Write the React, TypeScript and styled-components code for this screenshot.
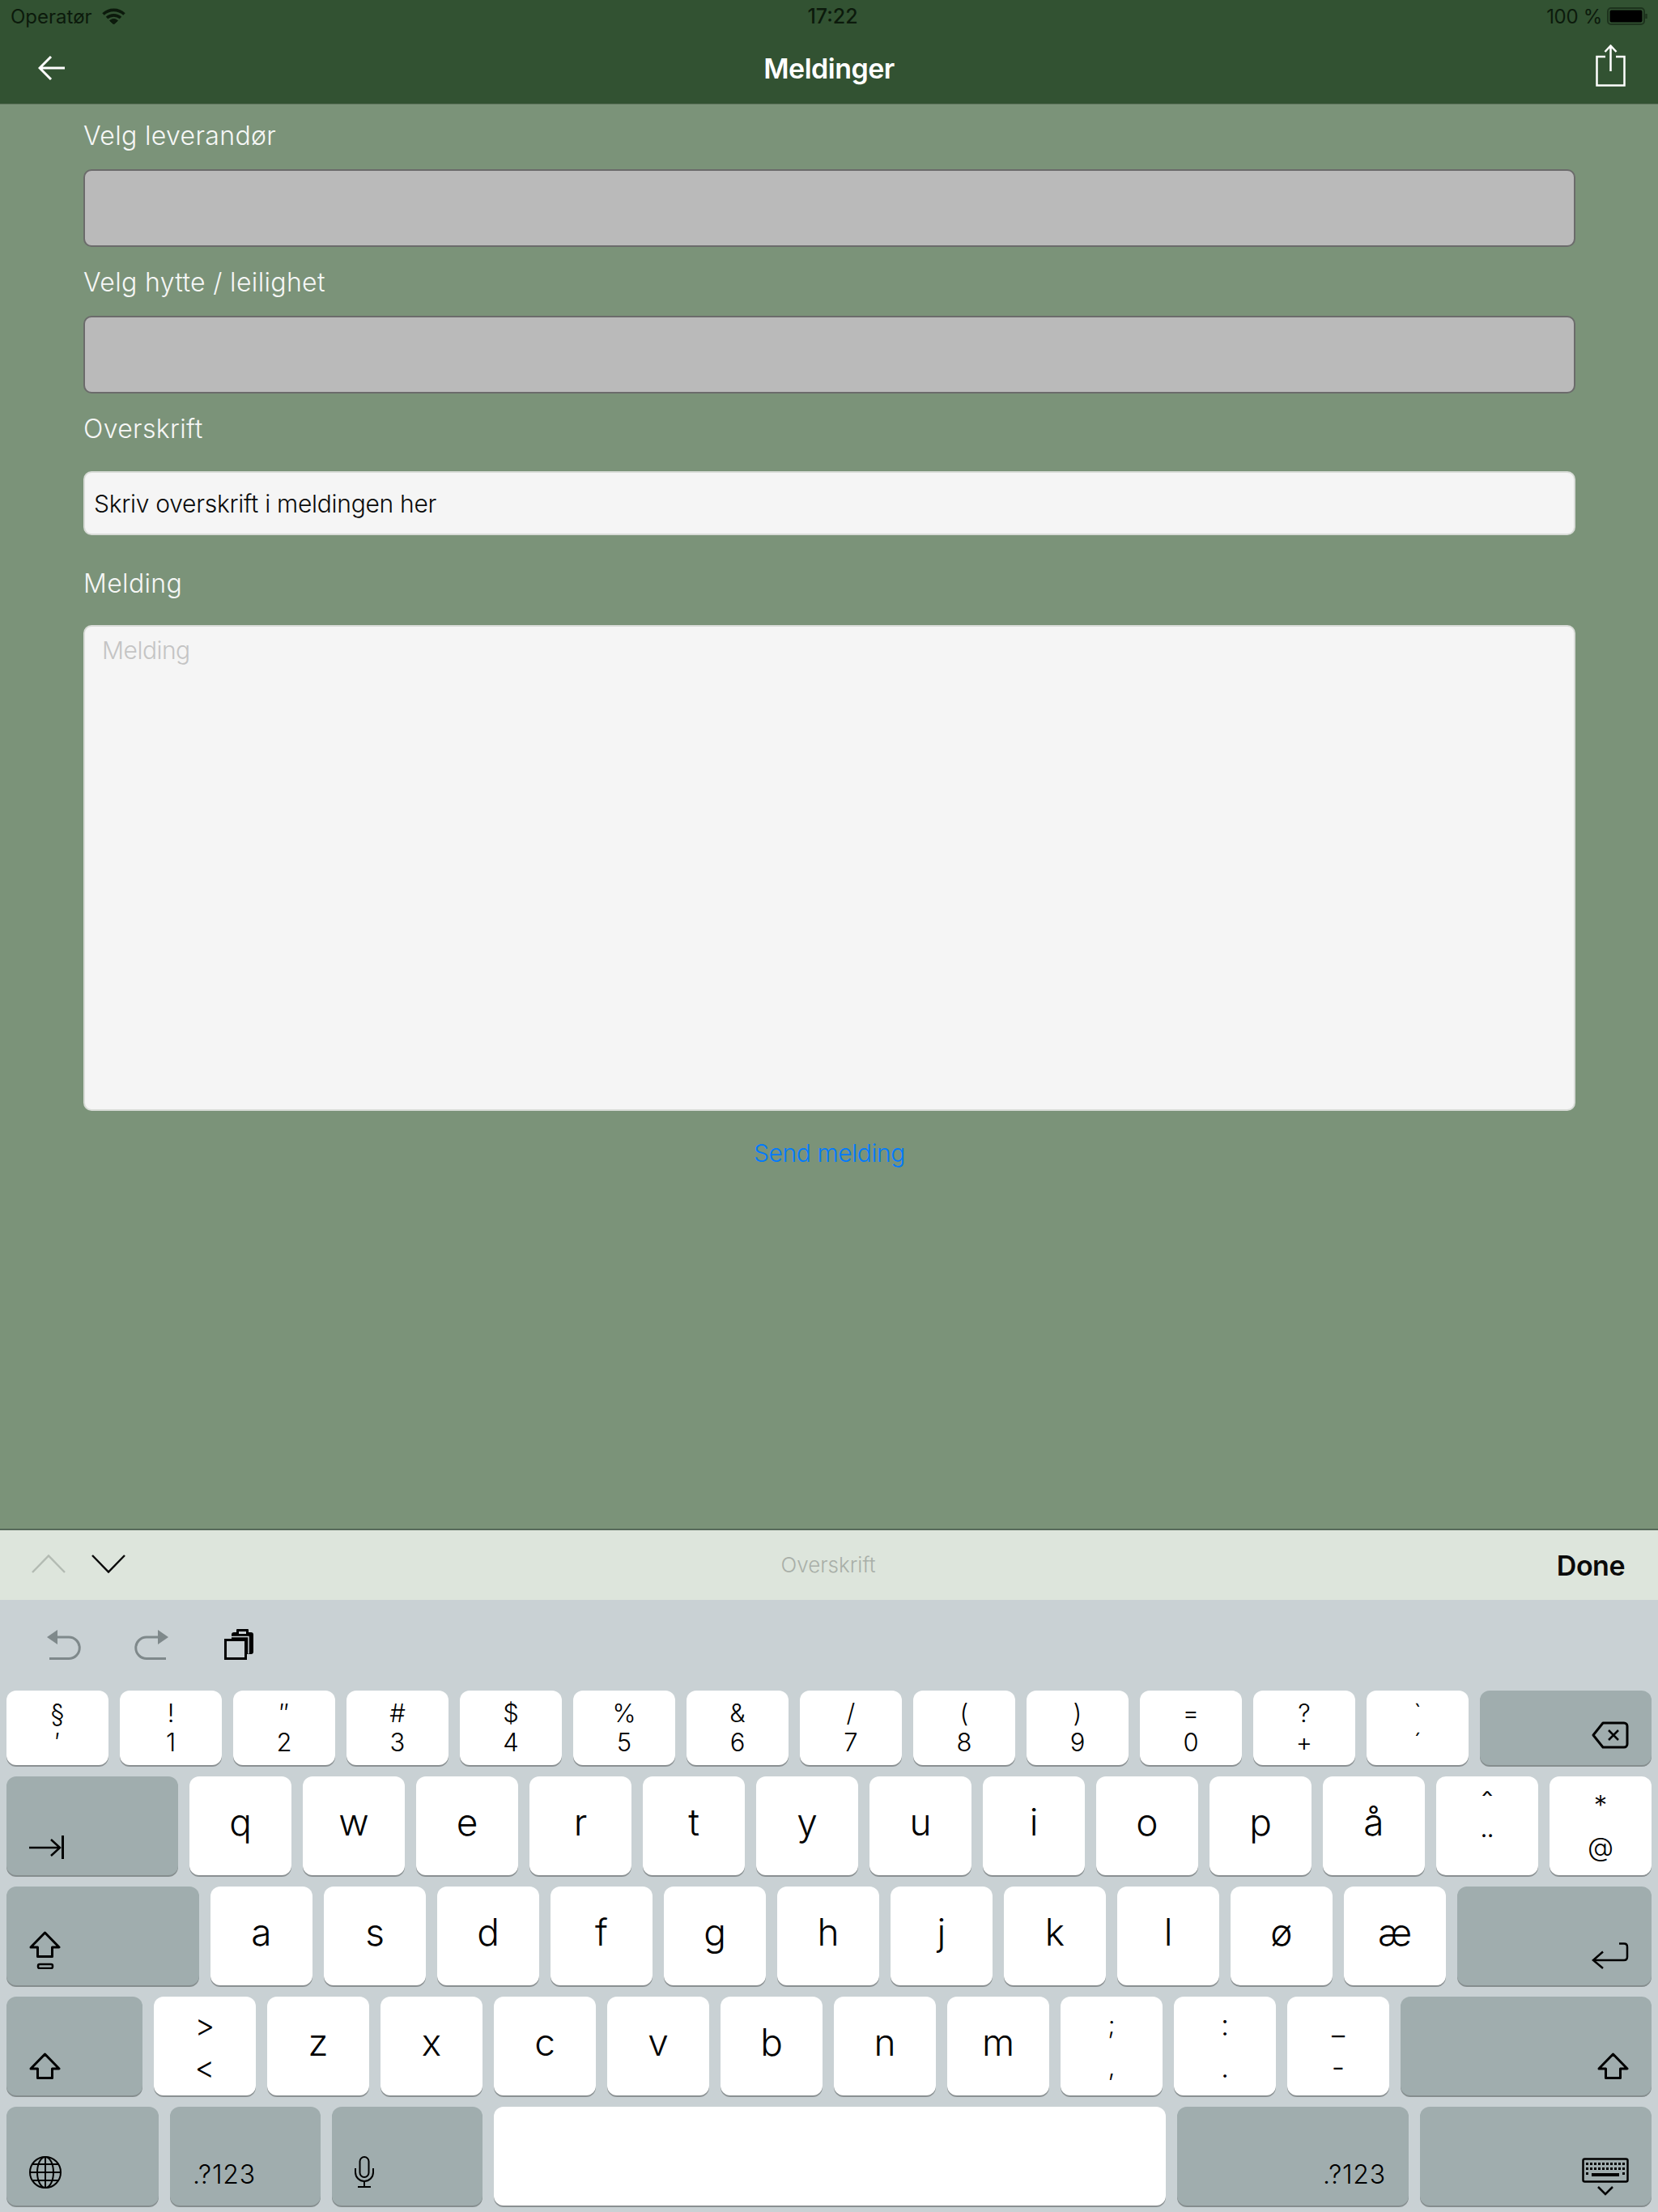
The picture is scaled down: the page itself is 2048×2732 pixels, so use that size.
import React from "react";
import styled, { createGlobalStyle } from "styled-components";

const GlobalStyle = createGlobalStyle`
  html, body {
    margin: 0;
    padding: 0;
    background: #7b9379;
  }
  * {
    box-sizing: border-box;
  }
`;

const Page = styled.div`
  width: 2048px;
  height: 2732px;
  display: flex;
  flex-direction: column;
  overflow: hidden;
  font-family: Inter, "Liberation Sans", sans-serif;
  background: #7b9379;
`;

const Header = styled.header`
  height: 129px;
  flex: none;
  background: #325232;
  border-bottom: 1px solid #5f735d;
`;

const StatusBar = styled.div`
  height: 40px;
  padding: 0 12px 0 13px;
  display: grid;
  grid-template-columns: 1fr auto 1fr;
  align-items: center;
  font-size: 24px;
  color: #0c1a0c;
`;

const StatusLeft = styled.div`
  display: flex;
  align-items: center;
  gap: 12px;
`;

const StatusTime = styled.div`
  padding-left: 8px;
  font-size: 25px;
  font-weight: 500;
`;

const StatusRight = styled.div`
  display: flex;
  align-items: center;
  justify-content: flex-end;
  gap: 6px;
  letter-spacing: -0.3px;
`;

const NavBar = styled.div`
  height: 88px;
  padding: 0 40px;
  display: grid;
  grid-template-columns: 1fr auto 1fr;
  align-items: center;
`;

const NavStart = styled.div`
  padding-left: 7px;
`;

const NavTitle = styled.h1`
  margin: 0;
  font-size: 34px;
  font-weight: 600;
  letter-spacing: -0.5px;
  color: #fff;
`;

const NavEnd = styled.div`
  display: flex;
  justify-content: flex-end;
  padding-bottom: 7px;
`;

const Form = styled.main`
  flex: 1;
  display: flex;
  flex-direction: column;
  padding: 0 102px 0 103px;
`;

const Label = styled.label<{ $h: number; $pb: number }>`
  height: ${(p) => p.$h}px;
  padding-bottom: ${(p) => p.$pb}px;
  display: flex;
  align-items: flex-end;
  font-size: 32px;
  font-weight: 350;
  line-height: 40px;
  letter-spacing: 0.35px;
  color: #f6f7f6;
`;

const Picker = styled.div`
  height: 96px;
  background: #bababa;
  border: 2px solid #6b6b6b;
  border-radius: 10px;
`;

const TextField = styled.div`
  height: 79px;
  padding: 0 11px;
  display: flex;
  align-items: center;
  background: #f5f5f5;
  border: 2px solid #d9dcd8;
  border-radius: 10px;
  font-size: 30px;
  font-weight: 350;
  letter-spacing: -0.28px;
  color: #0a0a0a;
`;

const TextArea = styled.div`
  height: 600px;
  padding: 10px 21px;
  background: #f5f5f5;
  border: 2px solid #d9dcd8;
  border-radius: 10px;
  font-size: 30px;
  font-weight: 350;
  line-height: 38px;
  letter-spacing: -0.5px;
  color: #c4c4c4;
`;

const SendRow = styled.div`
  height: 90px;
  display: flex;
  justify-content: center;
  padding-top: 14px;
`;

const SendButton = styled.button`
  padding: 0;
  border: 0;
  background: none;
  font-family: inherit;
  font-size: 30px;
  font-weight: 350;
  line-height: 40px;
  letter-spacing: -0.4px;
  color: #007aff;
`;

const Accessory = styled.div`
  height: 88px;
  flex: none;
  padding: 0 41px 0 39px;
  display: grid;
  grid-template-columns: 1fr auto 1fr;
  align-items: center;
  background: #dde5dc;
  border-top: 2px solid #56695a;
`;

const ArrowGroup = styled.div`
  display: flex;
  gap: 32px;
  padding-bottom: 4px;
`;

const FieldName = styled.div`
  padding-bottom: 2px;
  font-size: 26px;
  font-weight: 350;
  color: #a9afa8;
`;

const DoneButton = styled.button`
  justify-self: end;
  padding: 0;
  border: 0;
  background: none;
  font-family: inherit;
  font-size: 34px;
  font-weight: 600;
  letter-spacing: -0.5px;
  color: #0a0a0a;
`;

const Keyboard = styled.section`
  flex: none;
  height: 756px;
  padding: 0 8px;
  background: #c9d1d4;
`;

const UndoBar = styled.div`
  height: 112px;
  padding: 0 0 38px 50px;
  display: flex;
  align-items: flex-end;
  gap: 66px;
`;

const KeyRows = styled.div`
  display: flex;
  flex-direction: column;
  gap: 14px;
`;

const KeyRow = styled.div`
  display: flex;
  gap: 14px;
`;

const Key = styled.div<{ $w?: number; $h: number }>`
  width: ${(p) => p.$w ?? 126}px;
  height: ${(p) => p.$h}px;
  flex: none;
  display: flex;
  flex-direction: column;
  align-items: center;
  justify-content: center;
  background: #fff;
  border-radius: 12px;
  box-shadow: 0 2px 0 #8a9092;
  color: #000;
`;

const Letter = styled.span`
  font-size: 46px;
  font-weight: 350;
  line-height: 50px;
  margin-top: -10px;
`;

const DualTop = styled.span<{ $gap: number; $size: number }>`
  font-size: ${(p) => p.$size}px;
  font-weight: 350;
  line-height: 32px;
  margin-bottom: ${(p) => p.$gap}px;
`;

const DualBottom = styled.span<{ $size: number }>`
  font-size: ${(p) => p.$size}px;
  font-weight: 350;
  line-height: 32px;
`;

const FuncKey = styled.div<{ $w: number; $h: number; $end?: boolean; $pb?: number }>`
  width: ${(p) => p.$w}px;
  height: ${(p) => p.$h}px;
  flex: none;
  padding: 0 28px ${(p) => p.$pb ?? 20}px;
  display: flex;
  align-items: flex-end;
  justify-content: ${(p) => (p.$end ? "flex-end" : "flex-start")};
  background: #a0adae;
  border-radius: 12px;
  box-shadow: 0 2px 0 #858d8e;
  font-size: 32px;
  font-weight: 350;
  line-height: 36px;
  letter-spacing: 0.8px;
  color: #000;
`;

const Icon = styled.svg`
  display: block;
  flex: none;
  fill: none;
  stroke: currentColor;
`;

const BackArrow = () => (
  <Icon width="33" height="30" viewBox="0 0 33 30" strokeWidth="3" color="#fff">
    <path d="M33 15H2M16 1 2 15l14 14" />
  </Icon>
);

const ShareIcon = () => (
  <Icon width="37" height="52" viewBox="0 0 37 52" strokeWidth="2.5" color="#fff">
    <path d="M18.5 1.5V33M11.5 9l7-7.5 7 7.5" />
    <path d="M12 15H1.5v35.5h34V15H25" />
  </Icon>
);

const WifiIcon = () => (
  <Icon width="29" height="20" viewBox="0 0 29 20" strokeWidth="3.6" color="#0c1a0c">
    <path d="M1.5 7.5a19 19 0 0 1 26 0" />
    <path d="M6 12a13 13 0 0 1 17 0" />
    <path d="M9.500 15.500l5 4.500 5-4.500a8 8 0 0 0-10 0z" fill="currentColor" strokeWidth="1" />
  </Icon>
);

const BatteryIcon = () => (
  <Icon width="51" height="22" viewBox="0 0 51 22" strokeWidth="2" color="#0c1a0c">
    <rect x="1" y="1" width="45" height="20" rx="4" opacity="0.55" />
    <rect x="3.5" y="3.5" width="40" height="15" rx="2" fill="#000" stroke="none" />
    <path d="M48.5 8v6" opacity="0.55" strokeWidth="2.5" />
  </Icon>
);

const ChevronUp = () => (
  <Icon width="42" height="23" viewBox="0 0 42 23" strokeWidth="2.5" color="#b3bbb3">
    <path d="M1 22 21 1.5 41 22" />
  </Icon>
);

const ChevronDown = () => (
  <Icon width="42" height="23" viewBox="0 0 42 23" strokeWidth="2.5" color="#0a0a0a">
    <path d="M1 1l20 20.5L41 1" />
  </Icon>
);

const UndoIcon = () => (
  <Icon width="42" height="37" viewBox="0 0 42 37" strokeWidth="3" color="#7f898b">
    <path d="M0 9l13-9v18z" fill="currentColor" stroke="none" />
    <path d="M12 9h15a13 13 0 0 1 0 26.5H3" />
  </Icon>
);

const RedoIcon = () => (
  <Icon width="42" height="37" viewBox="0 0 42 37" strokeWidth="3" color="#7f898b">
    <path d="M42 9 29 0v18z" fill="currentColor" stroke="none" />
    <path d="M30 9H15a13 13 0 0 0 0 26.5h24" />
  </Icon>
);

const PasteIcon = () => (
  <Icon width="39" height="38" viewBox="-3 0 39 38" color="#000">
    <rect x="9" y="4" width="27" height="27" rx="3" fill="#000" stroke="none" />
    <rect x="15" y="0" width="15" height="9" rx="1" fill="#000" stroke="none" />
    <rect x="18" y="3" width="9" height="3" fill="#c9d1d4" stroke="none" />
    <path d="M5 9.5h25v21" stroke="#c9d1d4" strokeWidth="1.5" />
    <rect x="1.5" y="13.5" width="25" height="23" fill="#c9d1d4" strokeWidth="3" />
  </Icon>
);

const DeleteIcon = () => (
  <Icon width="46" height="34" viewBox="0 0 46 34" strokeWidth="3">
    <path d="M14 2h26a4 4 0 0 1 4 4v22a4 4 0 0 1-4 4H14L2 17z" strokeLinejoin="round" />
    <path d="M21 11l12 12M33 11 21 23" strokeWidth="2.5" />
  </Icon>
);

const TabIcon = () => (
  <Icon width="43" height="29" viewBox="0 0 43 29" strokeWidth="2.5">
    <path d="M0 15h38M27 5l11 10-11 10" />
    <path d="M41.5 0v29" strokeWidth="3" />
  </Icon>
);

const ShiftIcon = () => (
  <Icon width="39" height="33" viewBox="0 0 39 33" strokeWidth="3" strokeLinejoin="round">
    <path d="M19.5 2 37 20h-8.500v11.500h-18V20H2z" />
  </Icon>
);

const CapsIcon = () => (
  <Icon width="39" height="47" viewBox="0 0 39 47" strokeWidth="3" strokeLinejoin="round">
    <path d="M19.5 2 37 20h-8.500v11.500h-18V20H2z" />
    <rect x="11" y="41" width="18" height="5" rx="2" strokeWidth="2.5" />
  </Icon>
);

const ReturnIcon = () => (
  <Icon width="46" height="33" viewBox="0 0 46 33" strokeWidth="2.5">
    <path d="M34 1.500h6q4 0 4 4V18q0 4-4 4H3" />
    <path d="M14 11.500 2 22l12 10" />
  </Icon>
);

const GlobeIcon = () => (
  <Icon width="40" height="40" viewBox="0 0 40 40" strokeWidth="2">
    <circle cx="20" cy="20" r="19" />
    <ellipse cx="20" cy="20" rx="10" ry="19" />
    <path d="M20 1v38M1 20h38M4 10h32M4 30h32" />
  </Icon>
);

const MicIcon = () => (
  <Icon width="24" height="39" viewBox="0 0 24 39" strokeWidth="2">
    <rect x="6.500" y="1" width="11" height="25" rx="5.500" />
    <path d="M1 15v5a11 11 0 0 0 22 0v-5M12 31v7M4 38h16" />
  </Icon>
);

const keyboardDots = [
  [5, 10, 15, 20, 25, 30, 35, 40, 45, 50],
  [5, 10, 15, 20, 25, 30, 35, 40, 45, 50],
];

const HideKeyboardIcon = () => (
  <Icon width="58" height="47" viewBox="0 0 58 47" strokeWidth="2.5">
    <rect x="1.500" y="1.500" width="55" height="28" rx="2" />
    {keyboardDots.map((row, i) =>
      row.map((x) => (
        <rect key={`${i}-${x}`} x={x} y={6 + i * 6} width="3" height="3" fill="currentColor" stroke="none" />
      ))
    )}
    <rect x="5" y="18" width="3" height="3" fill="currentColor" stroke="none" />
    <rect x="12" y="19" width="34" height="4" fill="currentColor" stroke="none" />
    <rect x="50" y="18" width="3" height="3" fill="currentColor" stroke="none" />
    <path d="M20 36l9 9 9-9" />
  </Icon>
);

type KeyDef = string | [string, string] | [string, string, number];

const numberRow: KeyDef[] = [
  ["§", "′"],
  ["!", "1"],
  ["″", "2"],
  ["#", "3"],
  ["$", "4"],
  ["%", "5"],
  ["&", "6"],
  ["/", "7"],
  ["(", "8"],
  [")", "9"],
  ["=", "0"],
  ["?", "+"],
  ["`", "´"],
];

const topRow: KeyDef[] = ["q", "w", "e", "r", "t", "y", "u", "i", "o", "p", "å", ["ˆ", "¨", 40], ["*", "@", 33]];
const homeRow: KeyDef[] = ["a", "s", "d", "f", "g", "h", "j", "k", "l", "ø", "æ"];
const bottomRow: KeyDef[] = [
  [">", "<", 38],
  "z",
  "x",
  "c",
  "v",
  "b",
  "n",
  "m",
  [";", ","],
  [":", ".", 36],
  ["_", "-", 36],
];

const renderKeys = (keys: KeyDef[], h: number, gap: number) =>
  keys.map((k) =>
    typeof k === "string" ? (
      <Key key={k} $h={h}>
        <Letter>{k}</Letter>
      </Key>
    ) : (
      <Key key={k[1]} $h={h}>
        <DualTop $gap={gap} $size={k[2] ?? 31}>
          {k[0]}
        </DualTop>
        <DualBottom $size={k[2] ?? 31}>{k[1]}</DualBottom>
      </Key>
    )
  );

const App: React.FC = () => {
  return (
    <Page>
      <GlobalStyle />
      <Header>
        <StatusBar>
          <StatusLeft>
            Operatør
            <WifiIcon />
          </StatusLeft>
          <StatusTime>17:22</StatusTime>
          <StatusRight>
            100 %
            <BatteryIcon />
          </StatusRight>
        </StatusBar>
        <NavBar>
          <NavStart>
            <BackArrow />
          </NavStart>
          <NavTitle>Meldinger</NavTitle>
          <NavEnd>
            <ShareIcon />
          </NavEnd>
        </NavBar>
      </Header>

      <Form>
        <Label $h={80} $pb={21}>Velg leverandør</Label>
        <Picker />
        <Label $h={85} $pb={21}>Velg hytte / leilighet</Label>
        <Picker />
        <Label $h={96} $pb={32}>Overskrift</Label>
        <TextField>Skriv overskrift i meldingen her</TextField>
        <Label $h={111} $pb={31}>Melding</Label>
        <TextArea>Melding</TextArea>
        <SendRow>
          <SendButton>Send melding</SendButton>
        </SendRow>
      </Form>

      <Accessory>
        <ArrowGroup>
          <ChevronUp />
          <ChevronDown />
        </ArrowGroup>
        <FieldName>Overskrift</FieldName>
        <DoneButton>Done</DoneButton>
      </Accessory>

      <Keyboard>
        <UndoBar>
          <UndoIcon />
          <RedoIcon />
          <PasteIcon />
        </UndoBar>
        <KeyRows>
          <KeyRow>
            {renderKeys(numberRow, 92, 4)}
            <FuncKey $w={212} $h={92} $end>
              <DeleteIcon />
            </FuncKey>
          </KeyRow>
          <KeyRow>
            <FuncKey $w={212} $h={122}>
              <TabIcon />
            </FuncKey>
            {renderKeys(topRow, 122, 20)}
          </KeyRow>
          <KeyRow>
            <FuncKey $w={238} $h={122}>
              <CapsIcon />
            </FuncKey>
            {renderKeys(homeRow, 122, 20)}
            <FuncKey $w={240} $h={122} $end>
              <ReturnIcon />
            </FuncKey>
          </KeyRow>
          <KeyRow>
            <FuncKey $w={168} $h={122}>
              <ShiftIcon />
            </FuncKey>
            {renderKeys(bottomRow, 122, 20)}
            <FuncKey $w={310} $h={122} $end>
              <ShiftIcon />
            </FuncKey>
          </KeyRow>
          <KeyRow>
            <FuncKey $w={188} $h={122} $pb={21}>
              <GlobeIcon />
            </FuncKey>
            <FuncKey $w={186} $h={122} $pb={20}>
              .?123
            </FuncKey>
            <FuncKey $w={186} $h={122} $pb={22}>
              <MicIcon />
            </FuncKey>
            <Key $w={830} $h={122} />
            <FuncKey $w={286} $h={122} $end $pb={20}>
              .?123
            </FuncKey>
            <FuncKey $w={286} $h={122} $end $pb={12}>
              <HideKeyboardIcon />
            </FuncKey>
          </KeyRow>
        </KeyRows>
      </Keyboard>
    </Page>
  );
};

export default App;
